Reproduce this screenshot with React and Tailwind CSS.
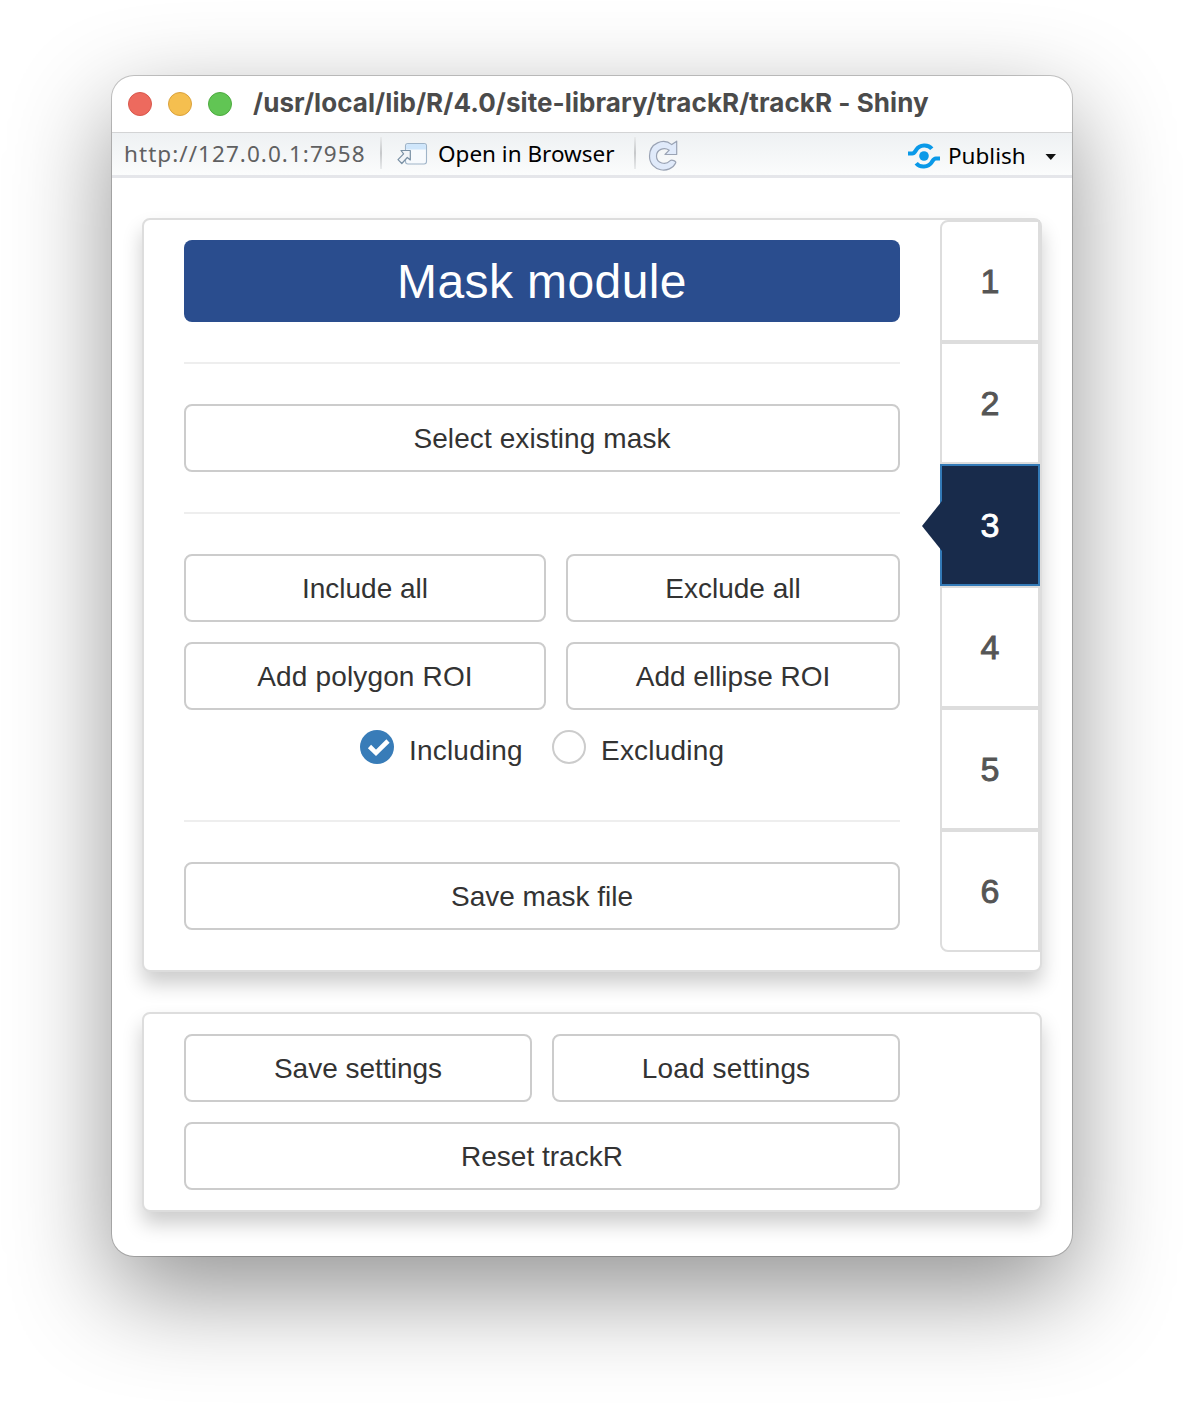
import React from "react";

function Button({ children, className = "", textClass = "" }) {
  return (
    <button
      className={`flex h-[68px] items-center justify-center rounded-lg border-2 border-[#cccccc] bg-white pt-0.5 text-[28px] leading-10 whitespace-nowrap text-[#333333] ${className}`}
    >
      <span className={textClass}>{children}</span>
    </button>
  );
}

function Rule({ className = "" }) {
  return <hr className={`h-0.5 border-0 bg-[#eeeeee] ${className}`} />;
}

function Separator({ className = "" }) {
  return (
    <span
      className={`h-8 w-0.5 shrink-0 bg-linear-to-b from-[#e9ebec] via-[#c6c8ca] to-[#e9ebec] ${className}`}
    />
  );
}

function Toolbar() {
  return (
    <div className="flex h-[46px] items-start border-t border-b-3 border-t-[#d3d4d5] border-b-[#e5e6ea] bg-linear-to-b from-[#eef1f3] to-[#fbfcfc] pl-3 font-['Noto_Sans','Open_Sans',sans-serif] text-[22.5px] leading-[42px] whitespace-nowrap text-black">
      <span className="w-[256px] shrink-0 text-[#5f6061]">
        <span className="tracking-[1.05px]">http://127.0.0.1:7958</span>
      </span>
      <Separator className="mt-1" />
      <svg className="mt-[9px] ml-[14px] h-6 w-8 shrink-0" viewBox="0 0 32 24" fill="none">
        <rect x="9.500" y="1.500" width="21" height="20.500" rx="2.500" fill="#f7fafd" stroke="#9fb4c8" strokeWidth="1.1" />
        <path d="M10 7.500V4.500a2.500 2.500 0 0 1 2.500-2.500h15A2.500 2.500 0 0 1 30 4.500v3z" fill="#cfe6fb" />
        <path
          d="M5 8.500h9.300V18l-3-2.500L5.800 21.500 2 17.700l5.600-5.900z"
          fill="#f2f5f8"
          stroke="#7990a4"
          strokeWidth="1.2"
          strokeLinejoin="round"
        />
      </svg>
      <span className="ml-[10px] w-[196px] shrink-0">Open in Browser</span>
      <Separator className="mt-1" />
      <svg className="mt-[7px] ml-[12px] h-8 w-8 shrink-0" viewBox="0 0 32 32" fill="none">
        <path
          d="M23.800 4.600 28.700 1.200V14.500H17l4.200-4.300C16 6.800 8.400 9.500 8.500 16.200c.1 7.600 9.500 8.900 13.400 4.700 1.800-1.600 6.800.2 5.700 2.100C22.500 34.300 1.500 32 1.500 16 1.500 3 15.500-2.300 23.800 4.600Z"
          fill="#e0eafa"
          stroke="#9aa3b4"
          strokeWidth="1.2"
          strokeLinejoin="round"
        />
      </svg>
      <svg className="mt-[10px] ml-[228px] h-[26px] w-8 shrink-0" viewBox="0 0 32 26" fill="none">
        <circle cx="16" cy="13" r="4.800" fill="#0a99e8" />
        <path
          d="M0 10.500h4.200c2.200 0 2.700-1.600 4-3.600 3.500-5.600 12-5.800 15.600-1.100M32 15.500h-4.200c-2.200 0-2.700 1.600-4 3.600-3.500 5.600-12 5.800-15.600 1.100"
          stroke="#0a99e8"
          strokeWidth="4"
        />
      </svg>
      <span className="mt-[2px] ml-[8px] w-[97px] shrink-0">Publish</span>
      <svg className="mt-[21px] h-1.5 w-3 shrink-0" viewBox="0 0 12 6">
        <path d="M0.500 0h10.500L5.800 6z" fill="#111" />
      </svg>
    </div>
  );
}

function Tabs() {
  return (
    <nav className="flex w-[100px] shrink-0 flex-col text-[34px] text-[#555555]">
      {["1", "2", "3", "4", "5", "6"].map((n) =>
        n === "3" ? (
          <div
            key={n}
            className="relative flex h-[122px] items-center justify-center border-2 border-[#337ab7] bg-[#182b4b] text-white"
          >
            <svg className="absolute top-[35px] -left-5 h-[50px] w-5" viewBox="0 0 20 50">
              <path d="M20 0v50L0 25z" fill="#182b4b" />
            </svg>
            <span className="[-webkit-text-stroke:0.8px_currentColor]">{n}</span>
          </div>
        ) : (
          <div
            key={n}
            className="flex h-[122px] items-center justify-center border-2 border-[#dddddd] bg-white first:rounded-tl-lg last:rounded-bl-lg"
          >
            <span className="[-webkit-text-stroke:0.9px_currentColor]">{n}</span>
          </div>
        )
      )}
    </nav>
  );
}

const panel =
  "rounded-lg border-2 border-[#dddddd] bg-white shadow-[0_12px_20px_rgba(0,0,0,0.2)]";

export default function App() {
  return (
    <div className="h-[1404px] w-[1184px] overflow-hidden bg-white px-28 pt-[76px] font-['Liberation_Sans',Arial,sans-serif]">
      <div className="h-[1180px] w-[960px] rounded-[22px] bg-white shadow-[0_0_0_1px_rgba(0,0,0,0.2),0_36px_100px_rgba(0,0,0,0.43)]">
        <header className="flex h-14 items-center pl-4">
          <div className="flex gap-4">
            <span className="size-6 rounded-full border border-[#d9574c] bg-[#ed6a5e]" />
            <span className="size-6 rounded-full border border-[#dba23c] bg-[#f5bf4f]" />
            <span className="size-6 rounded-full border border-[#4dab3f] bg-[#61c554]" />
          </div>
          <h1 className="-mt-0.5 ml-[21px] font-['Inter',sans-serif] text-[26px] leading-8 font-bold tracking-[0.07px] whitespace-nowrap text-[#4b4b4b]">
            /usr/local/lib/R/4.0/site-library/trackR/trackR - Shiny
          </h1>
        </header>
        <Toolbar />
        <main className="flex flex-col gap-10 px-[30px] pt-10">
          <section className={`flex h-[754px] ${panel}`}>
            <div className="flex w-[796px] flex-col px-10 pt-5">
              <h2 className="flex h-[82px] items-center justify-center rounded-lg bg-[#2a4d8e] pt-0.5 text-[48px] text-white">
                <span className="tracking-[0.4px]">Mask module</span>
              </h2>
              <Rule className="mt-10" />
              <Button className="mt-10" textClass="tracking-[0.1px]">Select existing mask</Button>
              <Rule className="mt-10" />
              <div className="mt-10 grid grid-cols-[362px_334px] gap-5">
                <Button>Include all</Button>
                <Button>Exclude all</Button>
                <Button textClass="tracking-[0.15px]">Add polygon ROI</Button>
                <Button>Add ellipse ROI</Button>
              </div>
              <div className="mt-5 flex h-[42px] pl-44 text-[28px] leading-[42px] tracking-[0.2px] text-[#333333]">
                <span className="flex size-[34px] items-center justify-center rounded-full bg-[#387cb8]">
                  <svg className="-mt-px ml-1 h-[18px] w-6" viewBox="0 0 24 18" fill="none">
                    <path d="M2.500 8.500 9 14.800 21 3" stroke="#fff" strokeWidth="4.600" />
                  </svg>
                </span>
                <span className="ml-[15px] w-[143px]">Including</span>
                <span className="size-[34px] rounded-full border-2 border-[#cccccc]" />
                <span className="ml-[15px]">Excluding</span>
              </div>
              <Rule className="mt-12" />
              <Button className="mt-10">Save mask file</Button>
            </div>
            <Tabs />
          </section>
          <section className={`flex h-[200px] ${panel}`}>
            <div className="grid w-[796px] grid-cols-2 content-start gap-5 px-10 pt-5">
              <Button>Save settings</Button>
              <Button textClass="tracking-[0.15px]">Load settings</Button>
              <Button className="col-span-2">Reset trackR</Button>
            </div>
          </section>
        </main>
      </div>
    </div>
  );
}
